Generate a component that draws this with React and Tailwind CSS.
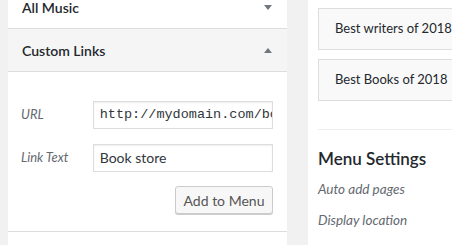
import React from 'react';

const font = { fontFamily: 'Lato, "Noto Sans", sans-serif' };

function Caret({ up }) {
  return (
    <svg width="8" height="5" viewBox="0 0 8 5" className="shrink-0">
      {up ? <path d="M0 5 L4 0 L8 5 Z" fill="#72777c" /> : <path d="M0 0 L8 0 L4 5 Z" fill="#72777c" />}
    </svg>
  );
}

function SectionRow({ title, up, active }) {
  return (
    <div
      className={`flex h-[43px] items-center justify-between border-b border-[#dddddd] pl-[14px] pr-[15px] ${
        active ? 'bg-[#f5f5f5]' : 'bg-white'
      }`}
    >
      <span className="text-[14px] font-semibold text-[#23282d]">{title}</span>
      <Caret up={up} />
    </div>
  );
}

function Field({ label, value, mono }) {
  return (
    <div className="flex items-center">
      <label className="w-[72px] text-[13px] italic text-[#646970]">{label}</label>
      <div className="h-[28px] w-[181px] overflow-hidden border border-[#dddddd] bg-white px-[6px] shadow-[inset_0_1px_2px_rgba(0,0,0,0.07)]">
        <div
          className={`whitespace-nowrap leading-[26px] text-[#32373c] ${
            mono ? 'font-["Liberation_Mono",monospace] text-[13.5px]' : 'text-[14px]'
          }`}
        >
          {value}
        </div>
      </div>
    </div>
  );
}

export default function App() {
  return (
    <div className="flex h-[245px] w-[452px] overflow-hidden bg-[#f1f1f1]" style={font}>
      {/* Left: menu item accordion */}
      <div className="ml-[8px] mt-[-14px] w-[279px] shrink-0 self-start bg-white">
        <SectionRow title="All Music" />
        <SectionRow title="Custom Links" up active />
        <div className="border-b border-[#dddddd] pb-[17px] pl-[13px] pr-[14px] pt-[29px]">
          <div className="flex flex-col gap-[15px]">
            <Field label="URL" value="http://mydomain.com/books" mono />
            <Field label="Link Text" value="Book store" />
          </div>
          <div className="mt-[14px] flex justify-end">
            <button
              type="button"
              className="h-[28px] w-[98px] rounded-[3px] border border-[#cccccc] bg-[#f7f7f7] text-[14px] text-[#555555] shadow-[0_1px_0_#cccccc]"
            >
              Add to Menu
            </button>
          </div>
        </div>
        <div className="h-[40px] bg-white" />
      </div>

      {/* Right: menu structure + settings */}
      <div className="ml-[21px] flex-1 overflow-hidden bg-white pl-[10px] pt-[8px]">
        <div className="flex w-[220px] flex-col gap-[9px]">
          <div className="flex h-[42px] items-center border border-[#dddddd] bg-[#f9f9f9] pl-[16px] text-[13px] text-[#23282d]">
            Best writers of 2018
          </div>
          <div className="flex h-[42px] items-center border border-[#dddddd] bg-[#f9f9f9] pl-[16px] text-[13px] text-[#23282d]">
            Best Books of 2018
          </div>
        </div>
        <div className="mt-[28px] w-[220px] border-t border-[#eeeeee]" />
        <h3 className="mt-[17px] text-[17px] font-semibold leading-[24px] text-[#23282d]">Menu Settings</h3>
        <p className="mt-[8px] text-[13.5px] italic leading-[20px] text-[#646970]">Auto add pages</p>
        <p className="mt-[11px] text-[13.5px] italic leading-[20px] text-[#646970]">Display location</p>
      </div>
    </div>
  );
}
